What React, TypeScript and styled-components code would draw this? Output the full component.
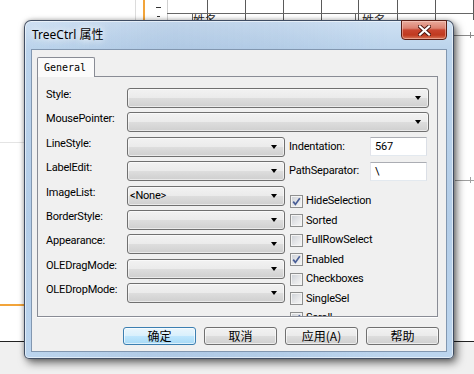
import React from "react";
import styled, { createGlobalStyle } from "styled-components";

const Global = createGlobalStyle`
  html, body { margin: 0; padding: 0; width: 474px; height: 374px; overflow: hidden; background: #fff; }
  #root { width: 474px; height: 374px; }
`;

const Desktop = styled.div`
  position: relative;
  width: 474px;
  height: 374px;
  overflow: hidden;
  background: linear-gradient(to bottom, #fff 0, #fff 341px, #f0f0f0 342px);
  font-family: Roboto, "Liberation Sans", sans-serif;
`;

/* remnants of the application behind the dialog */
const HLine = styled.div<{ $x: number; $y: number; $w: number; $c: string; $t?: number }>`
  position: absolute;
  left: ${(p) => p.$x}px;
  top: ${(p) => p.$y}px;
  width: ${(p) => p.$w}px;
  height: ${(p) => p.$t ?? 1}px;
  background: ${(p) => p.$c};
`;
const VLine = styled.div<{ $x: number; $y: number; $h: number; $c: string; $t?: number }>`
  position: absolute;
  left: ${(p) => p.$x}px;
  top: ${(p) => p.$y}px;
  height: ${(p) => p.$h}px;
  width: ${(p) => p.$t ?? 1}px;
  background: ${(p) => p.$c};
`;
const BgText = styled.div<{ $x: number; $y: number }>`
  position: absolute;
  left: ${(p) => p.$x}px;
  top: ${(p) => p.$y}px;
  font: 12px "Noto Sans CJK SC", sans-serif;
  line-height: 14px;
  color: #222;
`;

const Window = styled.div`
  position: absolute;
  left: 24px;
  top: 20px;
  width: 430px;
  height: 339px;
  box-sizing: border-box;
  border: 1px solid rgba(30, 40, 60, 0.78);
  border-radius: 7px 7px 5px 5px;
  background:
    linear-gradient(90deg, rgba(255,255,255,0) 0%, rgba(120,150,190,0.18) 35%, rgba(120,150,190,0.12) 60%, rgba(255,255,255,0) 85%),
    linear-gradient(180deg, #cfe1f3 0%, #bcd4ec 8%, #b3cde8 60%, #bcd5ee 100%);
  box-shadow: inset 0 0 0 1px rgba(255, 255, 255, 0.55), 3px 4px 9px rgba(0, 0, 0, 0.55), 0 0 4px rgba(0, 0, 0, 0.25);
  display: flex;
  flex-direction: column;
  padding: 0 6px 6px 6px;
`;

const TitleBar = styled.div`
  height: 28px;
  display: flex;
  align-items: flex-start;
  justify-content: space-between;
  flex-shrink: 0;
`;

const Title = styled.div`
  font: 12px "Noto Sans", "Noto Sans CJK SC", sans-serif;
  color: #000;
  padding: 6px 0 0 1px;
  line-height: 16px;
  text-shadow: 0 0 6px #fff, 0 0 10px rgba(255, 255, 255, 0.9);
`;

const CloseButton = styled.div`
  width: 46px;
  height: 20px;
  margin-top: -1px;
  box-sizing: border-box;
  border: 1px solid #5a1e15;
  border-radius: 0 0 4px 4px;
  background: linear-gradient(180deg, #e9ab9d 0%, #dc8271 40%, #c8452f 50%, #c0391f 78%, #d8775a 100%);
  box-shadow: inset 0 0 0 1px rgba(255, 220, 210, 0.45);
  display: flex;
  align-items: center;
  justify-content: center;
`;

const Client = styled.div`
  flex: 1;
  box-sizing: border-box;
  border: 1px solid #8297b0;
  background: #f0f0f0;
  display: flex;
  flex-direction: column;
  padding: 7px 6px 6px 5px;
`;

const TabStrip = styled.div`
  display: flex;
  position: relative;
  z-index: 1;
`;

const Tab = styled.div`
  width: 58px;
  height: 20px;
  box-sizing: border-box;
  border: 1px solid #898c95;
  border-bottom: none;
  border-radius: 2px 2px 0 0;
  background: #fbfbfb;
  margin-bottom: -1px;
  padding: 3px 0 0 6px;
  font: 10px "DejaVu Sans Mono", "Liberation Mono", monospace;
  line-height: 13px;
  color: #000;
`;

const Panel = styled.div`
  height: 241px;
  box-sizing: border-box;
  margin-right: 2px;
  border: 1px solid #898c95;
  box-shadow: 0 1px 0 #fff;
  background: #f0f0f0;
  overflow: hidden;
  padding: 11px 8px 0 8px;
`;

const Form = styled.div`
  display: grid;
  grid-template-columns: 81px 158px 144px;
  grid-auto-rows: 20px;
  row-gap: 4.4px;
  font-size: 11px;
  letter-spacing: -0.2px;
  color: #000;
`;

const Label = styled.div<{ $row: number }>`
  grid-column: 1;
  grid-row: ${(p) => p.$row};
  line-height: 14px;
  white-space: nowrap;
`;

const Combo = styled.div<{ $row: number; $wide?: boolean }>`
  grid-column: ${(p) => (p.$wide ? "2 / 4" : "2")};
  grid-row: ${(p) => p.$row};
  height: 20px;
  box-sizing: border-box;
  border: 1px solid #707070;
  border-radius: 3px;
  background: linear-gradient(180deg, #f2f2f2 0%, #ebebeb 48%, #dddddd 52%, #cfcfcf 100%);
  box-shadow: inset 0 0 0 1px rgba(255, 255, 255, 0.55);
  display: flex;
  align-items: center;
  justify-content: space-between;
  padding: 0 7px 0 2px;
`;

const ComboText = styled.span`
  line-height: 16px;
`;

const Arrow = styled.span`
  width: 0;
  height: 0;
  border-left: 3.5px solid transparent;
  border-right: 3.5px solid transparent;
  border-top: 4px solid #000;
`;

const Field = styled.div<{ $row: number }>`
  grid-column: 3;
  grid-row: ${(p) => p.$row};
  display: flex;
  align-items: center;
  padding-left: 4px;
`;

const FieldLabel = styled.span`
  width: 81px;
  line-height: 14px;
  white-space: nowrap;
`;

const TextBox = styled.div`
  width: 57px;
  height: 19px;
  box-sizing: border-box;
  border: 1px solid #abadb3;
  border-color: #abadb3 #dbdfe6 #e3e9ef #e2e3ea;
  background: #fff;
  padding: 0 4px;
  line-height: 17px;
`;

const CheckList = styled.div`
  grid-column: 3;
  grid-row: 5 / span 5;
  padding: 6px 0 0 5px;
  display: flex;
  flex-direction: column;
  min-height: 0;
`;

const CheckRow = styled.div`
  height: 19.5px;
  flex-shrink: 0;
  display: flex;
  align-items: center;
  gap: 3px;
  white-space: nowrap;
  line-height: 14px;
`;

const Box = styled.span`
  width: 13px;
  height: 13px;
  box-sizing: border-box;
  flex-shrink: 0;
  border: 1px solid #8e8f8f;
  background: linear-gradient(135deg, #cbcfd5 0%, #e6e7e9 55%, #f7f7f7 100%);
  box-shadow: inset 0 0 0 1px #f4f4f4;
  display: flex;
  align-items: center;
  justify-content: center;
`;

const ButtonBar = styled.div`
  display: flex;
  justify-content: flex-end;
  gap: 8px;
  margin-top: 10px;
  padding-right: 1px;
`;

const Button = styled.div<{ $default?: boolean }>`
  width: 73px;
  height: 18px;
  box-sizing: border-box;
  border: 1px solid ${(p) => (p.$default ? "#3c7fb1" : "#707070")};
  border-radius: 3px;
  background: ${(p) =>
    p.$default
      ? "linear-gradient(180deg, #eaf6fd 0%, #d9f0fc 48%, #bee6fd 52%, #a7d9f5 100%)"
      : "linear-gradient(180deg, #f2f2f2 0%, #ebebeb 48%, #dddddd 52%, #cfcfcf 100%)"};
  box-shadow: inset 0 0 0 1px rgba(255, 255, 255, 0.6);
  display: flex;
  align-items: center;
  justify-content: center;
  font: 12px "Noto Sans CJK SC", sans-serif;
  line-height: 14px;
  color: #000;
`;

const rows: { label: string; wide?: boolean; value?: string }[] = [
  { label: "Style:", wide: true },
  { label: "MousePointer:", wide: true },
  { label: "LineStyle:" },
  { label: "LabelEdit:" },
  { label: "ImageList:", value: "<None>" },
  { label: "BorderStyle:" },
  { label: "Appearance:" },
  { label: "OLEDragMode:" },
  { label: "OLEDropMode:" },
];

const checks: { label: string; checked?: boolean }[] = [
  { label: "HideSelection", checked: true },
  { label: "Sorted" },
  { label: "FullRowSelect" },
  { label: "Enabled", checked: true },
  { label: "Checkboxes" },
  { label: "SingleSel" },
  { label: "Scroll", checked: true },
];

const CheckMark = () => (
  <svg width="9" height="9" viewBox="0 0 9 9">
    <path d="M1.2 4.6 L3.4 7.4 L7.8 1.2" fill="none" stroke="#4a5f97" strokeWidth="1.7" />
  </svg>
);

const CloseGlyph = () => (
  <svg width="13" height="11" viewBox="0 0 13 11">
    <path d="M2 1.5 L11 9.5 M11 1.5 L2 9.5" stroke="#4a1710" strokeWidth="4" strokeLinecap="square" />
    <path d="M2 1.5 L11 9.5 M11 1.5 L2 9.5" stroke="#fff" strokeWidth="2.2" strokeLinecap="square" />
  </svg>
);

export default function App() {
  return (
    <Desktop>
      <Global />
      {/* background application */}
      <VLine $x={135} $y={0} $h={20} $c="#dcdcdc" />
      <VLine $x={143} $y={0} $h={20} $c="#f2a43a" $t={2} />
      <HLine $x={156} $y={7} $w={5} $c="#333" />
      <HLine $x={157} $y={16} $w={3} $c="#333" />
      <VLine $x={167} $y={0} $h={20} $c="#d0d0d0" />
      {[207, 245, 283, 321, 358, 397, 435, 473].map((x) => (
        <VLine key={x} $x={x} $y={0} $h={20} $c="#5a5a5a" />
      ))}
      <HLine $x={167} $y={13} $w={307} $c="#666" />
      <VLine $x={192} $y={13} $h={8} $c="#666" />
      <VLine $x={355} $y={13} $h={8} $c="#666" />
      <BgText $x={193} $y={13}>姓名</BgText>
      <BgText $x={362} $y={13}>姓名</BgText>
      <HLine $x={454} $y={35} $w={20} $c="#8a8a8a" />
      <VLine $x={470} $y={32} $h={6} $c="#8a8a8a" />
      <HLine $x={455} $y={180} $w={19} $c="#a0a0a0" />
      <VLine $x={470} $y={177} $h={6} $c="#a0a0a0" />
      <HLine $x={0} $y={142} $w={24} $c="#e4e4e4" />
      <HLine $x={0} $y={304} $w={24} $c="#f2a43a" $t={2} />
      <HLine $x={0} $y={341} $w={24} $c="#222" />
      <HLine $x={454} $y={341} $w={20} $c="#222" />

      <Window>
        <TitleBar>
          <Title>TreeCtrl 属性</Title>
          <CloseButton>
            <CloseGlyph />
          </CloseButton>
        </TitleBar>
        <Client>
          <TabStrip>
            <Tab>General</Tab>
          </TabStrip>
          <Panel>
            <Form>
              {rows.map((r, i) => (
                <React.Fragment key={r.label}>
                  <Label $row={i + 1}>{r.label}</Label>
                  <Combo $row={i + 1} $wide={r.wide}>
                    <ComboText>{r.value ?? ""}</ComboText>
                    <Arrow />
                  </Combo>
                </React.Fragment>
              ))}
              <Field $row={3}>
                <FieldLabel>Indentation:</FieldLabel>
                <TextBox>567</TextBox>
              </Field>
              <Field $row={4}>
                <FieldLabel>PathSeparator:</FieldLabel>
                <TextBox>\</TextBox>
              </Field>
              <CheckList>
                {checks.map((c) => (
                  <CheckRow key={c.label}>
                    <Box>{c.checked && <CheckMark />}</Box>
                    <span>{c.label}</span>
                  </CheckRow>
                ))}
              </CheckList>
            </Form>
          </Panel>
          <ButtonBar>
            <Button $default>确定</Button>
            <Button>取消</Button>
            <Button>应用(A)</Button>
            <Button>帮助</Button>
          </ButtonBar>
        </Client>
      </Window>
    </Desktop>
  );
}
